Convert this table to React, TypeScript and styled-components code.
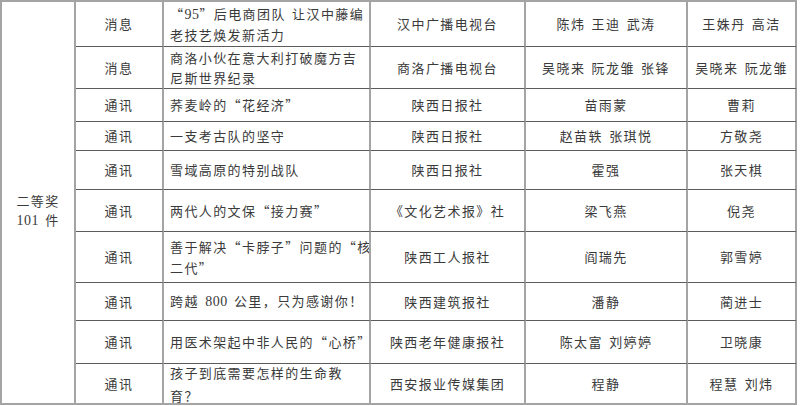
import * as React from "react";
import styled, { createGlobalStyle } from "styled-components";

type Entry = {
  kind: string;
  title: string[];
  unit: string;
  authors: string;
  editors: string;
  height: number;
  lineHeight?: number;
};

const entries: Entry[] = [
  { kind: "消息", title: ["“95”后电商团队 让汉中藤编", "老技艺焕发新活力"], unit: "汉中广播电视台", authors: "陈炜 王迪 武涛", editors: "王姝丹 高洁", height: 45 },
  { kind: "消息", title: ["商洛小伙在意大利打破魔方吉", "尼斯世界纪录"], unit: "商洛广播电视台", authors: "吴晓来 阮龙雏 张锋", editors: "吴晓来 阮龙雏", height: 42 },
  { kind: "通讯", title: ["荞麦岭的“花经济”"], unit: "陕西日报社", authors: "苗雨蒙", editors: "曹莉", height: 33 },
  { kind: "通讯", title: ["一支考古队的坚守"], unit: "陕西日报社", authors: "赵苗轶 张琪悦", editors: "方敬尧", height: 29 },
  { kind: "通讯", title: ["雪域高原的特别战队"], unit: "陕西日报社", authors: "霍强", editors: "张天棋", height: 39 },
  { kind: "通讯", title: ["两代人的文保“接力赛”"], unit: "《文化艺术报》社", authors: "梁飞燕", editors: "倪尧", height: 42 },
  { kind: "通讯", title: ["善于解决“卡脖子”问题的“核", "二代”"], unit: "陕西工人报社", authors: "阎瑞先", editors: "郭雪婷", height: 51, lineHeight: 21 },
  { kind: "通讯", title: ["跨越 800 公里，只为感谢你！"], unit: "陕西建筑报社", authors: "潘静", editors: "蔺进士", height: 38 },
  { kind: "通讯", title: ["用医术架起中非人民的“心桥”"], unit: "陕西老年健康报社", authors: "陈太富 刘婷婷", editors: "卫晓康", height: 43 },
  { kind: "通讯", title: ["孩子到底需要怎样的生命教", "育？"], unit: "西安报业传媒集团", authors: "程静", editors: "程慧 刘炜", height: 41, lineHeight: 23 },
];

// 数字用西文衬线体，其余用中文字体
const withNumbers = (text: string) =>
  text.split(/(\d+)/).map((part, i) =>
    /^\d+$/.test(part) ? <Num key={i}>{part}</Num> : <React.Fragment key={i}>{part}</React.Fragment>
  );

export default function App() {
  const rows = entries.map((e) => `${e.height}px`).join(" ");

  return (
    <>
      <GlobalStyle />
      <Grid $rows={rows}>
        <Cell $align="center" $span={entries.length} $last>
          <Lines $lh={19} $offset={16}>
            二等奖
            <br />
            {withNumbers("101 件")}
          </Lines>
        </Cell>
        {entries.map((e, idx) => {
          const last = idx === entries.length - 1;
          return (
            <React.Fragment key={idx}>
              <Cell $align="center" $last={last}>{e.kind}</Cell>
              <Cell $align="left" $last={last}>
                <Lines $lh={e.lineHeight ?? 20}>
                  {e.title.map((line, i) => (
                    <React.Fragment key={i}>
                      {i > 0 && <br />}
                      {withNumbers(line)}
                    </React.Fragment>
                  ))}
                </Lines>
              </Cell>
              <Cell $align="center" $last={last}>{e.unit}</Cell>
              <Cell $align="center" $last={last}>{e.authors}</Cell>
              <Cell $align="center" $last={last}>{e.editors}</Cell>
            </React.Fragment>
          );
        })}
      </Grid>
    </>
  );
}

const GlobalStyle = createGlobalStyle`
  html, body {
    margin: 0;
    padding: 0;
    background: #ffffff;
  }
  body {
    font-family: "Noto Sans CJK SC", "Noto Sans", sans-serif;
    font-size: 13px;
    color: #3a3a3a;
  }
`;

const Grid = styled.div<{ $rows: string }>`
  display: grid;
  grid-template-columns: 74px 88px 207px 155px 162px 109px;
  grid-template-rows: ${(p) => p.$rows};
  width: max-content;
  border-left: 2px solid #a4a4a4;
  border-top: 2px solid #a4a4a4;
`;

const Cell = styled.div<{ $align: "left" | "center"; $span?: number; $last?: boolean }>`
  box-sizing: border-box;
  display: flex;
  align-items: center;
  justify-content: ${(p) => (p.$align === "center" ? "center" : "flex-start")};
  text-align: ${(p) => p.$align};
  padding: ${(p) => (p.$align === "center" ? "0 2px" : "0 4px 0 6px")};
  grid-row: ${(p) => (p.$span ? `1 / span ${p.$span}` : "auto")};
  border-right: 2px solid #a4a4a4;
  border-bottom: ${(p) => (p.$last ? "2px solid #a4a4a4" : "1px solid #5c5c5c")};
  letter-spacing: 1.4px;
  word-spacing: 2px;
  white-space: nowrap;
  line-height: 20px;
  overflow: hidden;
`;

const Lines = styled.div<{ $lh: number; $offset?: number }>`
  line-height: ${(p) => p.$lh}px;
  padding-top: ${(p) => p.$offset ?? 0}px;
`;

const Num = styled.span`
  font-family: "Liberation Serif", "Times New Roman", serif;
  font-size: 14px;
  letter-spacing: 0.5px;
`;
